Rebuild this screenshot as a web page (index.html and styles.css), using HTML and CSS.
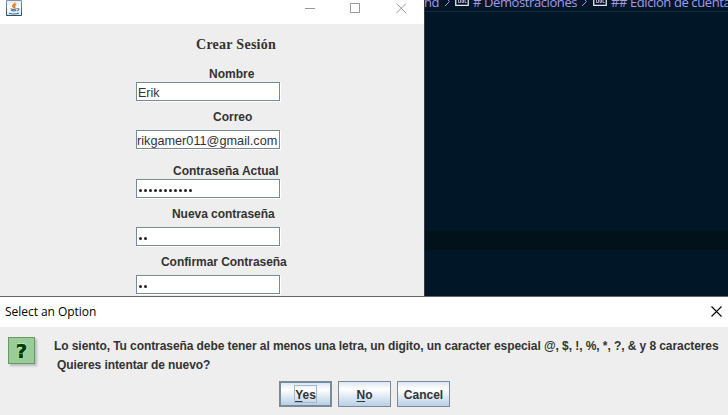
FILE: index.html
```html
<!DOCTYPE html>
<html lang="es">
<head>
<meta charset="utf-8">
<title>Select an Option</title>
<link rel="stylesheet" href="styles.css">
</head>
<body>
<main class="desktop">
  <div class="workspace">
    <section class="window">
      <header class="window-bar">
        <svg class="java" width="16" height="16" viewBox="0 0 16 16">
          <defs><linearGradient id="tile" x2="0" y2="1"><stop stop-color="#8099ac"/><stop offset="1" stop-color="#254c6c"/></linearGradient>
          <linearGradient id="face" x2="0" y2="1"><stop stop-color="#e5ebef"/><stop offset=".5" stop-color="#fff"/><stop offset="1" stop-color="#dce3e8"/></linearGradient></defs>
          <rect width="16" height="16" rx="1" fill="url(#tile)"/>
          <rect x="1" y="1" width="14" height="14" fill="url(#face)"/>
          <path d="M8.700 2.500c1 1.700-2.600 2.200-2 3.700.200.700 1.200 1 1 1.900M10.300 4.500c-2.300.9-2.400 1.600-1.600 2.400.4.400-.1.900-.5 1.200" fill="none" stroke="#f08322" stroke-width="1.500"/>
          <path d="M4.500 8.700c1.500.7 4.500.7 6.200 0M5 10.200c1.500.6 4 .6 5.200 0M11.300 8.600c2.300-.4 2 2-.4 2.400M3 13.200c2.600.8 7.400.8 9.800-.2" fill="none" stroke="#4c7290" stroke-width="1.200"/>
        </svg>
        <svg class="controls" width="102" height="12" viewBox="0 0 102 12" fill="none" stroke="#999">
          <path d="M0 5.500h10M45.500.5h9v9h-9zM91.500.5l9.500 9.500M101 .5l-9.500 9.500"/>
        </svg>
      </header>
      <form class="form">
        <h1 class="title"><span>Crear Sesión</span></h1>
        <label class="label label-name">Nombre</label>
        <div class="field">Erik</div>
        <label class="label label-mail">Correo</label>
        <div class="field field-mail">rikgamer011@gmail.com</div>
        <label class="label label-current">Contraseña Actual</label>
        <div class="field secret"><i></i><i></i><i></i><i></i><i></i><i></i><i></i><i></i><i></i><i></i><i></i></div>
        <label class="label label-new">Nueva contraseña</label>
        <div class="field secret"><i></i><i></i></div>
        <label class="label label-confirm">Confirmar Contraseña</label>
        <div class="field secret"><i></i><i></i></div>
      </form>
    </section>
    <section class="editor">
      <nav class="crumbs">
        <span class="crumb-end">nd</span>
        <svg class="chevron" width="8" height="12" viewBox="0 0 8 12"><path d="M2-3l4.500 4.500L2 6"/></svg>
        <svg class="symbol" width="14" height="12" viewBox="0 0 14 12"><path d="M.75-3v8.300h12.500V-3"/><path class="abc" d="M3.500 0v2.500h2V0M7 0v2.500h1.500V0M11.500 2.500H10V0"/></svg>
        <span class="crumb-demo"># Demostraciones</span>
        <svg class="chevron" width="8" height="12" viewBox="0 0 8 12"><path d="M2-3l4.500 4.500L2 6"/></svg>
        <svg class="symbol" width="14" height="12" viewBox="0 0 14 12"><path d="M.75-3v8.300h12.500V-3"/><path class="abc" d="M3.500 0v2.500h2V0M7 0v2.500h1.500V0M11.500 2.500H10V0"/></svg>
        <span class="crumb-edit">## Edición de cuenta</span>
      </nav>
      <div class="current-line"></div>
    </section>
  </div>
  <section class="dialog">
    <header class="dialog-bar">
      <span class="dialog-title">Select an Option</span>
      <svg class="close" width="11" height="11" viewBox="0 0 11 11" stroke="#000" stroke-width="1.100"><path d="M.5.5l10 10M10.500.5l-10 10"/></svg>
    </header>
    <div class="dialog-body">
      <div class="message">
        <div class="question">?</div>
        <div class="copy">
          <p class="line-one">Lo siento, Tu contraseña debe tener al menos una letra, un digito, un caracter especial @, $, !, %, *, ?, &amp; y 8 caracteres</p>
          <p class="line-two">Quieres intentar de nuevo?</p>
        </div>
      </div>
      <div class="actions">
        <button class="button default"><span class="focus"><u>Y</u>es</span></button>
        <button class="button"><span><u>N</u>o</span></button>
        <button class="button"><span>Cancel</span></button>
      </div>
    </div>
  </section>
</main>
</body>
</html>
```
FILE: styles.css
```css
* { box-sizing: border-box; }
body {
  margin: 0;
  overflow: hidden;
  font: bold 12px/18px "Liberation Sans", Arial, sans-serif;
  color: #333;
}
p, h1 { margin: 0; }
.desktop { width: 728px; height: 415px; display: flex; flex-direction: column; }
.workspace { height: 296px; display: flex; }
.window { width: 424px; background: #eee; overflow: hidden; }
.window-bar {
  height: 24px;
  padding: 0 17px 0 6px;
  display: flex;
  justify-content: space-between;
  background: #fff;
}
.controls { margin-top: 3px; }
.form { display: flex; flex-direction: column; align-items: flex-start; padding-left: 136px; }
.title {
  height: 40px;
  padding-left: 60px;
  font: bold 14px/42px "Liberation Serif", "Times New Roman", serif;
  letter-spacing: .27px;
}
.label { height: 18px; line-height: 20px; white-space: nowrap; }
.label-name { margin-left: 73px; }
.label-mail { margin: 7px 0 4px 77px; line-height: 18px; }
.label-current { margin: 12px 0 0 37px; }
.label-new { margin: 6px 0 5px 36px; letter-spacing: -.05px; }
.label-confirm { margin: 6px 0 5px 25px; letter-spacing: -.05px; }
.field {
  width: 144px;
  height: 19px;
  flex: none;
  padding: 2px 0 0 1px;
  overflow: hidden;
  white-space: nowrap;
  font-weight: normal;
  font-size: 12.500px;
  line-height: 17px;
  background: #fff;
  border: 1px solid #7a8a99;
  box-shadow: 1px 1px 0 #fff;
}
.field-mail { padding-left: 0; font-size: 12.700px; }
.secret { display: flex; padding: 9px 0 0 2px; gap: 2px; }
.secret i { width: 3px; height: 3px; border-radius: 1.500px; background: #222; }
.editor { flex: 1; background: #011627; border-left: 1px solid #303b45; overflow: hidden; }
.crumbs {
  height: 12px;
  display: flex;
  align-items: flex-start;
  overflow: hidden;
  white-space: nowrap;
  font: 13px/18px "Open Sans", sans-serif;
  letter-spacing: -.4px;
  color: #a599e9;
  border-bottom: 1px solid #122d42;
}
.crumbs span { flex: none; margin-top: -7px; }
.crumb-end { width: 13px; margin-left: -1px; }
.crumb-demo { width: 105px; margin-left: 4px; }
.crumb-edit { margin-left: 4px; }
.chevron, .symbol { flex: none; fill: none; stroke: #a599e9; }
.chevron { margin-left: 6px; }
.crumb-demo + .chevron { margin-left: 2px; }
.symbol { margin-left: 4px; stroke: #e4e9ef; stroke-width: 1.300; }
.crumb-demo ~ .symbol { margin-left: 5px; }
.abc { stroke: #b9a3c9; stroke-width: 1; }
.current-line { height: 19px; margin-top: 219px; background: #01121b; }
.dialog { height: 119px; border-top: 1px solid #656565; background: #eee; }
.dialog-bar {
  height: 30px;
  padding: 0 6px 0 5px;
  display: flex;
  justify-content: space-between;
  background: #fff;
  color: #000;
  font: 12px/30px "Open Sans", sans-serif;
}
.dialog-title { letter-spacing: -.04px; }
.close { margin-top: 9px; }
.message { display: flex; height: 54px; padding: 10px 0 0 8px; }
.question {
  width: 27px;
  height: 27px;
  border: 1px solid #669966;
  background: #99cc99;
  box-shadow: 2px 2px 2px #bbb;
  color: #003c00;
  font: bold 20px/26px "DejaVu Sans", sans-serif;
  text-align: center;
  -webkit-text-stroke: .6px #003c00;
  text-shadow: -1px 0 #ceface, 1px 0 #ceface, 0 -1px #ceface, 0 1px #ceface;
}
.copy { margin-left: 19px; white-space: nowrap; }
.line-one { line-height: 19px; letter-spacing: -.075px; }
.line-two { padding-left: 3px; line-height: 19px; letter-spacing: -.08px; }
.actions { display: flex; gap: 6px; padding-left: 279px; }
.button {
  width: 53px;
  height: 26px;
  padding: 0;
  font: inherit;
  color: #333;
  border: 1px solid #7a8a99;
  border-radius: 0;
  background: linear-gradient(#dde8f3 0, #fff 30%, #b8cfe5 100%);
}
.button span { position: relative; top: 1px; }
.button.default { border-width: 2px; }
.button .focus { display: inline-block; height: 18px; line-height: 18px; top: 0; border: 1px solid #a3b8cc; }
.button u { text-underline-offset: 2px; }
```
